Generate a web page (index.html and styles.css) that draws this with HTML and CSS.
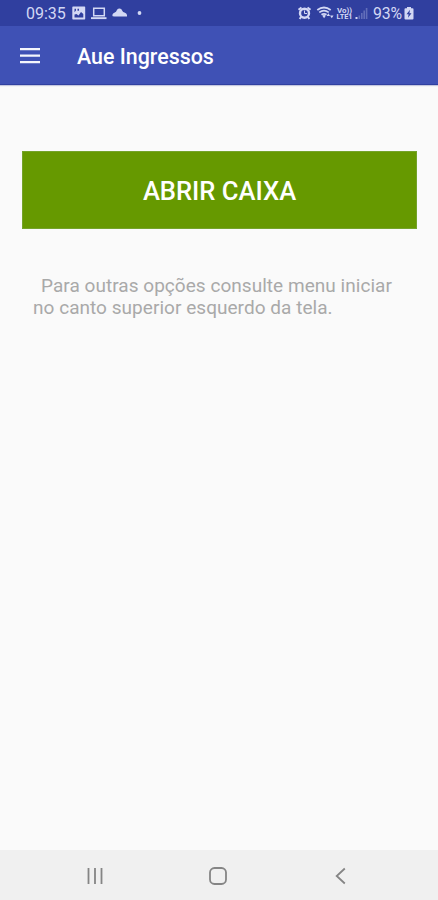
FILE: index.html
```html
<!DOCTYPE html>
<html lang="pt-BR">
<head>
<meta charset="utf-8">
<title>Aue Ingressos</title>
<link rel="stylesheet" href="styles.css">
</head>
<body>
<div class="screen">
  <div class="status">
    <span class="time">09:35</span>
    <svg class="notifications" width="72" height="26" viewBox="72 0 72 26">
      <path fill-rule="evenodd" d="M73 6.500h11.500q.7 0 .7.700v11.600q0 .7-.7.700H73q-.7 0-.7-.7V7.200q0-.7.700-.7zM74.500 14.500V17.500h8.800v-3.500l-2.300-2-2.500 3.500-2-1.500zM74.500 8.700v3.500L76 10.500V8.700zM77.500 8.700v2H79v-2z"/>
      <path fill="none" stroke="currentColor" stroke-width="1.500" d="M93.700 8.200h10.600v7.600H93.700z"/>
      <path d="M91 17.200h15.500v1.900H91z"/>
      <path d="M114.500 16.500q-2.500 0-2.200-1.600.4-1.600 2.500-2.400 1.400-.5 2-2.300.7-1.800 2.700-1.600 2 .1 2.800 2.200.6 1.400 2.200 1.700 2.200.5 2.500 2.500v1.500z"/>
      <circle cx="139.500" cy="13" r="1.900"/>
    </svg>
    <svg class="signals" width="72" height="26" viewBox="297 0 72 26">
      <path fill="none" stroke="currentColor" stroke-width="2" d="m298.500 9.800 3-2.300m6 0 3 2.300M301 17l-1.300 2m8.300-2 1.300 2"/>
      <path fill-rule="evenodd" d="M304.500 7.500a5.700 5.700 0 1 1 0 11.400 5.700 5.700 0 0 1 0-11.400zm0 2.400a3.300 3.300 0 1 0 0 6.600 3.300 3.300 0 0 0 0-6.600z"/>
      <path fill="none" stroke="currentColor" d="M304.500 10.500v3h2.500"/>
      <path fill="none" stroke="currentColor" stroke-width="1.800" d="M317.300 10q6.700-5 13.400 0M319.300 12.400q4.700-3.500 9.400 0M321.500 14.700q2.500-1.800 5 0"/>
      <path d="m322.300 15.700 1.900-1 1.600 1-1.700 2.600zM326.600 16l1.800-2.800 1.700 2.800zM330 15.500h3.500l-1.700 2.800z"/>
      <text class="volte" x="337" y="12.800" textLength="15" lengthAdjust="spacingAndGlyphs">Vo))</text>
      <text class="volte" x="336.500" y="19.200" textLength="16" lengthAdjust="spacingAndGlyphs">LTE1</text>
      <path d="M355.500 17h2v2h-2z"/>
      <path opacity=".3" d="M358.500 15.500h1.600V19h-1.600zM361 13h1.600v6H361zM363.400 10.500h1.600V19h-1.600zM365.800 8h1.600v11h-1.600z"/>
    </svg>
    <span class="percent">93%</span>
    <svg class="battery" width="10" height="26" viewBox="0 0 10 26">
      <path fill-rule="evenodd" d="M3 7h4v1.300h1.500q1 0 1 1V18.500q0 1-1 1h-7q-1 0-1-1V9.300q0-1 1-1H3zM6 9.800 2.500 14.200h2.100L4 17.800 7.500 13.300H5.400z"/>
    </svg>
  </div>
  <header class="appbar">
    <svg class="menu" width="20" height="16" viewBox="0 0 20 16"><path d="M0 0h20v2.200H0zM0 6.500h20v2.200H0zM0 13h20v2.200H0z"/></svg>
    <h1>Aue Ingressos</h1>
  </header>
  <main>
    <button class="open">ABRIR CAIXA</button>
    <p><span class="line first">Para outras opções consulte menu iniciar</span> <span class="line">no canto superior esquerdo da tela.</span></p>
  </main>
  <nav class="navbar">
    <svg width="18" height="18" viewBox="0 0 18 18"><path d="M2.500 1v16M9 1v16M15.500 1v16"/></svg>
    <svg width="18" height="18" viewBox="0 0 18 18"><rect x="1" y="1" width="16" height="16" rx="4.500"/></svg>
    <svg width="18" height="18" viewBox="0 0 18 18"><path d="M12.800 1.500 4.700 9l8.100 7.500"/></svg>
  </nav>
</div>
</body>
</html>
```
FILE: styles.css
```css
* { box-sizing: border-box; }
body { margin: 0; font-family: Roboto, "Liberation Sans", sans-serif; }
.screen {
  display: flex;
  flex-direction: column;
  width: 438px;
  height: 900px;
  background: #fafafa;
}
.status {
  display: flex;
  height: 26px;
  padding-left: 26px;
  background: #303f9f;
  color: #d3d8f4;
  font-size: 16px;
  line-height: 28px;
}
.status svg { flex: none; fill: currentColor; }
.time { width: 46px; }
.signals { margin-left: 153px; }
.percent { width: 31px; margin-left: 4px; font-size: 15.8px; letter-spacing: -0.1px; }
.volte { font-size: 7px; font-weight: 700; }
.appbar {
  display: flex;
  align-items: center;
  height: 59px;
  padding-left: 20px;
  background: #3f51b5;
  border-bottom: 1px solid #3040a0;
  box-shadow: 0 1px 1px #c5c8df;
  color: #fff;
}
.menu { margin-top: 2px; fill: #f4f5fc; }
h1 {
  margin: 3px 0 0 37px;
  font-size: 21.4px;
  font-weight: 500;
  line-height: 28px;
  white-space: nowrap;
}
main { flex: 1; padding: 66px 21px 0 22px; }
.open {
  display: block;
  width: 100%;
  height: 78px;
  padding: 2px 0 0;
  border: 1px solid #74a32a;
  background: #669900;
  color: #fff;
  font: 500 25.6px/30px Roboto, "Liberation Sans", sans-serif;
}
p {
  margin: 46px 0 0 11px;
  color: #a9a9a9;
  font-size: 19px;
  line-height: 22px;
  letter-spacing: 0.04px;
  white-space: nowrap;
}
.line { display: block; }
.first { padding-left: 8px; }
.navbar {
  display: flex;
  justify-content: space-between;
  height: 50px;
  padding: 17px 88px 0 86px;
  background: #f0f0f0;
}
.navbar svg { fill: none; stroke: #858585; stroke-width: 1.8; }
```
